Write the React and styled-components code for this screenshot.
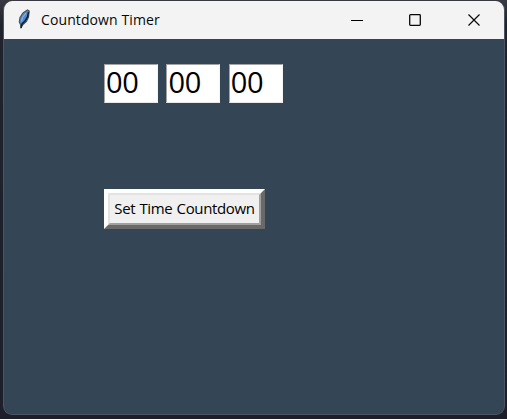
import React from "react";
import styled, { createGlobalStyle } from "styled-components";

const GlobalStyle = createGlobalStyle`
  * { box-sizing: border-box; }
  body { margin: 0; background: #1e2029; overflow: hidden; }
`;

const Desktop = styled.main`
  width: 507px;
  height: 419px;
  padding: 1px 2px 4px 3px;
  background: linear-gradient(#393943 0, #20222c 25px, #1d202a 100%);
`;

const Window = styled.section`
  height: 414px;
  border: 1px solid #4a5663;
  border-top: 0;
  border-radius: 9px;
  overflow: hidden;
  background: #344555;
`;

const TitleBar = styled.header`
  display: flex;
  align-items: center;
  height: 38px;
  padding-left: 13px;
  background: #f3f3f3;
`;

const Title = styled.h1`
  flex: 1;
  margin: 0 0 0 9px;
  font: 400 14px/20px "Open Sans", "Noto Sans", sans-serif;
  letter-spacing: 0.1px;
  color: #080808;
  white-space: nowrap;
`;

const WindowControl = styled.button`
  display: grid;
  place-items: center;
  width: 58.5px;
  height: 38px;
  padding: 0;
  border: 0;
  background: transparent;
`;

const Controls = styled.div`
  display: flex;
  margin-right: 1px;
`;

const Content = styled.div`
  padding: 25px 0 0 100px;
`;

const TimeRow = styled.div`
  display: flex;
  gap: 8.4px;
`;

const TimeField = styled.div`
  width: 54px;
  height: 39px;
  padding-left: 1px;
  border: 1px solid;
  border-color: #a3a3a3 #f5f5f5 #e7e7e7 #a3a3a3;
  background: #fff;
  color: #000;
  font: 400 29px/34px "Open Sans", "Noto Sans", sans-serif;
  letter-spacing: -0.3px;
`;

const CountdownButton = styled.button`
  display: block;
  width: 161px;
  height: 40px;
  margin-top: 86px;
  padding: 0;
  border: 4px solid;
  border-color: #fff #696969 #696969 #fff;
  background: #f0f0f0;
`;

const ButtonFace = styled.span`
  display: flex;
  align-items: center;
  justify-content: center;
  height: 32px;
  border: 2px solid;
  border-color: #e3e3e3 #a0a0a0 #a0a0a0 #e3e3e3;
  color: #000;
  font: 400 15px/22px "Open Sans", "Noto Sans", sans-serif;
  letter-spacing: -0.35px;
  word-spacing: 0.6px;
  white-space: nowrap;
`;

const ButtonLabel = styled.span`
  transform: translate(0, -1px);
`;

const Feather = () => (
  <svg width="15" height="22" viewBox="0 0 15 22" aria-hidden="true">
    <path d="M4 18.5 3.5 15.5 2.3 13 3 8.5 6 4 10.5 1 12.2 2 11.5 8 9.5 12.5 6 15.5Z" fill="#508bd0" stroke="#50565b" strokeWidth="1.2" />
    <path d="M11.5 3 10.5 8 8 12 5 15 4 19" fill="none" stroke="#15202e" strokeWidth="1.5" />
    <path d="m9 4-3.5 4.5-1 4" fill="none" stroke="#8fbdec" />
  </svg>
);

export default function App() {
  return (
    <>
      <GlobalStyle />
      <Desktop>
        <Window>
          <TitleBar>
            <Feather />
            <Title>Countdown Timer</Title>
            <Controls>
              <WindowControl aria-label="Minimize">
                <svg width="12" height="13"><path d="M0 6.5h12" stroke="#000" /></svg>
              </WindowControl>
              <WindowControl aria-label="Maximize">
                <svg width="12" height="12"><rect x=".7" y=".7" width="10.6" height="10.6" rx=".8" fill="none" stroke="#080808" strokeWidth="1.3" /></svg>
              </WindowControl>
              <WindowControl aria-label="Close">
                <svg width="12" height="12"><path d="m.5.5 11 11M11.5.5l-11 11" stroke="#080808" strokeWidth="1.2" /></svg>
              </WindowControl>
            </Controls>
          </TitleBar>
          <Content>
            <TimeRow>
              {["hours", "minutes", "seconds"].map((unit) => (
                <TimeField key={unit}>00</TimeField>
              ))}
            </TimeRow>
            <CountdownButton>
              <ButtonFace>
                <ButtonLabel>Set Time Countdown</ButtonLabel>
              </ButtonFace>
            </CountdownButton>
          </Content>
        </Window>
      </Desktop>
    </>
  );
}
